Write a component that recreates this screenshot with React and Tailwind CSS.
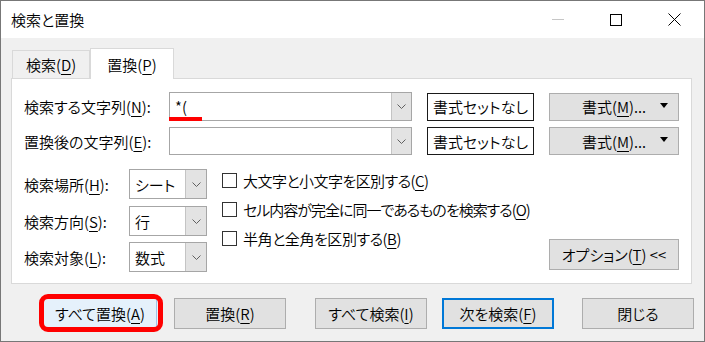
import React from 'react'

const K = ({ children }) => <span className="underline underline-offset-[3px] decoration-1">{children}</span>

function Chevron() {
  return (
    <svg width="9" height="5" viewBox="0 0 9 5" className="block">
      <path d="M0.5 0.5 L4.5 4.5 L8.5 0.5" fill="none" stroke="#606060" strokeWidth="1" />
    </svg>
  )
}

function Combo({ width, height, children, dropW = 'w-[20px]' }) {
  return (
    <div className={`flex border border-[#a6a6a6] bg-white shrink-0 ${width} ${height}`}>
      <div className="flex-1 flex items-center pl-[5px] relative">{children}</div>
      <div className={`${dropW} bg-[#e3e3e3] border-l border-[#c4c4c4] flex items-center justify-center`}>
        <Chevron />
      </div>
    </div>
  )
}

function TitleBar() {
  return (
    <div className="h-[37px] bg-white flex items-center">
      <div className="pl-[10px] flex-1 text-[15px]">検索と置換</div>
      <div className="flex h-full mr-px">
        <div className="w-[58px] flex items-center justify-center">
          <div className="w-[12px] h-px bg-[#c6c6c6]" />
        </div>
        <div className="w-[58px] flex items-center justify-center">
          <div className="w-[12px] h-[12px] border border-black" />
        </div>
        <div className="w-[58px] flex items-center justify-center">
          <svg width="13" height="13" viewBox="0 0 13 13">
            <path d="M0.5 0.5 L12.5 12.5 M12.5 0.5 L0.5 12.5" stroke="#000" strokeWidth="1" />
          </svg>
        </div>
      </div>
    </div>
  )
}

function FormatButtons() {
  return (
    <>
      <div className="ml-[15px] w-[107px] h-[28px] border border-[#1a1a1a] bg-white flex items-center justify-center whitespace-nowrap shrink-0">
        書式セットなし
      </div>
      <div className="ml-[15px] w-[130px] h-[28px] border border-[#adadad] bg-[#e1e1e1] flex items-center justify-center relative whitespace-nowrap shrink-0">
        <span>書式(<K>M</K>)...</span>
        <svg width="8" height="5" viewBox="0 0 8 5" className="absolute right-[10px] top-[9px]">
          <path d="M0 0 H8 L4 5 Z" fill="#000" />
        </svg>
      </div>
    </>
  )
}

function Panel() {
  return (
    <div className="h-[206px] bg-white border border-[#d9d9d9] pl-[12px] pt-[13px] flex flex-col">
      <div className="flex items-center h-[29px]">
        <div className="w-[145px] whitespace-nowrap shrink-0">検索する文字列(<K>N</K>):</div>
        <Combo width="w-[243px]" height="h-[29px]">
          <span className="leading-none">*(</span>
          <div className="absolute -left-px -bottom-px w-[33px] h-[4px] bg-[#ff0000]" />
        </Combo>
        <FormatButtons />
      </div>
      <div className="flex items-center h-[28px] mt-[6px]">
        <div className="w-[145px] whitespace-nowrap shrink-0">置換後の文字列(<K>E</K>):</div>
        <Combo width="w-[243px]" height="h-[28px]" />
        <FormatButtons />
      </div>

      <div className="flex mt-[14px] h-[102px]">
        <div className="flex flex-col shrink-0">
          {[
            ['検索場所', 'H', 'シート', ''],
            ['検索方向', 'S', '行', 'mt-[7px]'],
            ['検索対象', 'L', '数式', 'mt-[6px]'],
          ].map(([label, key, value, mt]) => (
            <div key={key} className={`flex items-center h-[30px] ${mt}`}>
              <div className="w-[105px] whitespace-nowrap">{label}(<K>{key}</K>):</div>
              <Combo width="w-[78px]" height="h-[30px]" dropW="w-[21px]">
                {value}
              </Combo>
            </div>
          ))}
        </div>

        <div className="flex flex-col ml-[15px] gap-[7px]">
          {[
            ['大文字と小文字を区別する', 'C', 'tracking-[-0.55px]'],
            ['セル内容が完全に同一であるものを検索する', 'O', 'tracking-[-1px]'],
            ['半角と全角を区別する', 'B', 'tracking-[-0.45px]'],
          ].map(([label, key, tr]) => (
            <div key={key} className="flex items-center h-[22px] whitespace-nowrap">
              <div className="w-[15px] h-[15px] border border-[#333] bg-white shrink-0" />
              <div className={`ml-[6px] ${tr}`}>{label}(<K>{key}</K>)</div>
            </div>
          ))}
        </div>

        <div className="ml-auto mr-[12px] self-end mb-px w-[130px] h-[31px] shrink-0 border border-[#adadad] bg-[#e1e1e1] flex items-center justify-center whitespace-nowrap">
          オプション(<K>T</K>) &lt;&lt;
        </div>
      </div>
    </div>
  )
}

function BottomButtons() {
  const base = 'h-[31px] flex items-center justify-center whitespace-nowrap shrink-0'
  const gray = 'border border-[#adadad] bg-[#e1e1e1]'
  return (
    <div className="flex mt-[14px]">
      <div className={`relative ml-[32px] w-[114px] ${base} border border-[#9cc4ec] border-b-2 border-b-[#0078d7] bg-[#e5f1fb]`}>
        すべて置換(<K>A</K>)
        <div className="absolute -left-[5px] -right-[7px] -top-[5px] -bottom-[5px] border-[5px] border-[#ff0000] rounded-[9px]" />
      </div>
      <div className={`ml-[17px] w-[112px] ${base} ${gray}`}>置換(<K>R</K>)</div>
      <div className={`ml-[29px] w-[112px] ${base} ${gray}`}>すべて検索(<K>I</K>)</div>
      <div className={`ml-[15px] w-[112px] ${base} border-2 border-[#0078d7] bg-[#e1e1e1]`}>次を検索(<K>F</K>)</div>
      <div className={`ml-[28px] w-[112px] ${base} ${gray}`}>閉じる</div>
    </div>
  )
}

export default function App() {
  return (
    <div className="w-[705px] h-[342px] bg-[#f0f0f0] border border-[#777] flex flex-col text-[15px] text-black font-['Noto_Sans_CJK_JP','Noto_Sans',sans-serif] font-[350] [font-feature-settings:'palt'] leading-none">
      <TitleBar />
      <div className="flex flex-col pl-[10px] pr-[12px] pt-[10px]">
        <div className="flex items-end -mb-px relative z-10">
          <div className="ml-px w-[78px] h-[28px] bg-[#f0f0f0] border border-b-0 border-[#d9d9d9] flex items-center justify-center mb-px">
            検索(<K>D</K>)
          </div>
          <div className="w-[84px] h-[31px] bg-white border border-b-0 border-[#d9d9d9] flex items-center justify-center">
            置換(<K>P</K>)
          </div>
        </div>
        <Panel />
        <BottomButtons />
      </div>
    </div>
  )
}
